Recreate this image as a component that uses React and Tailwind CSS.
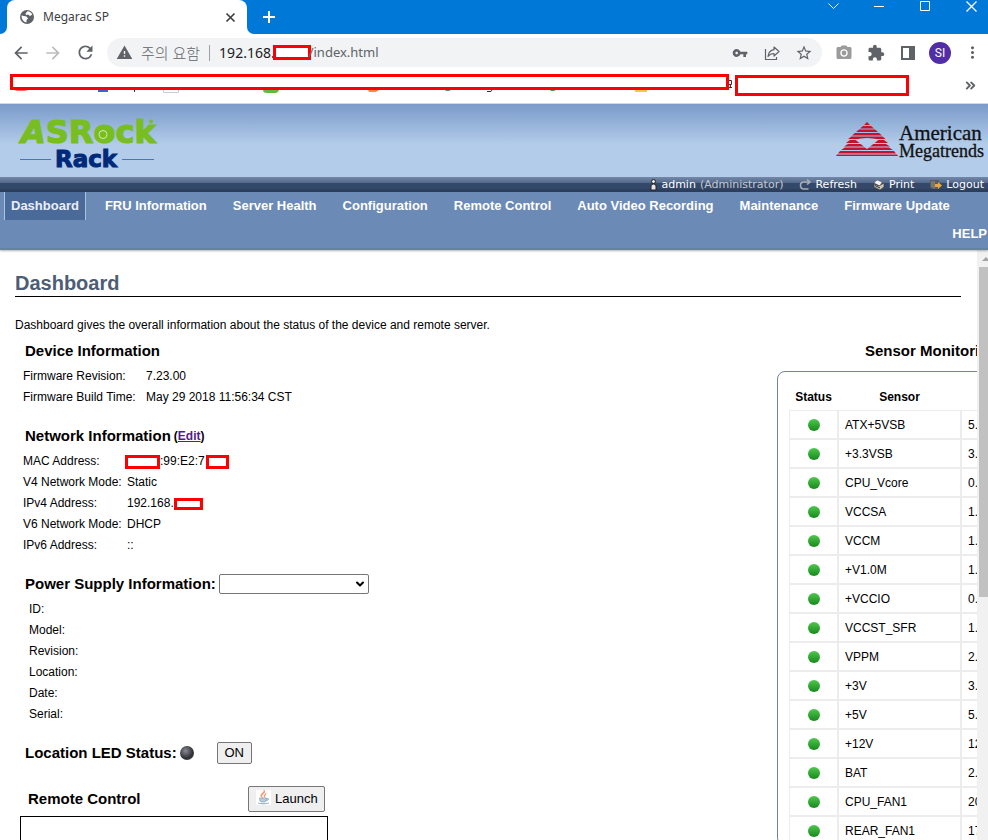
import React from "react";
import {
  MdArrowBack,
  MdArrowForward,
  MdRefresh,
  MdWarning,
  MdVpnKey,
  MdStarBorder,
  MdPhotoCamera,
  MdExtension,
  MdMoreVert,
} from "react-icons/md";
import { ChevronDown, ChevronsRight } from "lucide-react";

const NAV = [
  "Dashboard",
  "FRU Information",
  "Server Health",
  "Configuration",
  "Remote Control",
  "Auto Video Recording",
  "Maintenance",
  "Firmware Update",
];

const SENSORS = [
  ["ATX+5VSB", "5.1"],
  ["+3.3VSB", "3.4"],
  ["CPU_Vcore", "0.7"],
  ["VCCSA", "1.0"],
  ["VCCM", "1.2"],
  ["+V1.0M", "1.0"],
  ["+VCCIO", "0.9"],
  ["VCCST_SFR", "1.0"],
  ["VPPM", "2.5"],
  ["+3V", "3.3"],
  ["+5V", "5.0"],
  ["+12V", "12.1"],
  ["BAT", "2.9"],
  ["CPU_FAN1", "2000"],
  ["REAR_FAN1", "1700"],
];

const SUPPLY = ["ID:", "Model:", "Revision:", "Location:", "Date:", "Serial:"];

function TabStrip() {
  return (
    <div className="flex h-[34px] shrink-0 items-start bg-[#0078d7] pl-[7px]">
      <div className="relative flex h-full w-[240px] items-center rounded-t-lg bg-white pl-3 pr-[10px]">
        <svg className="absolute -left-[7px] bottom-0" width="7" height="7" viewBox="0 0 7 7">
          <path d="M7 0v7H0a7 7 0 0 0 7-7z" fill="#fff" />
        </svg>
        <svg className="absolute -right-[7px] bottom-0" width="7" height="7" viewBox="0 0 7 7">
          <path d="M0 0v7h7a7 7 0 0 1-7-7z" fill="#fff" />
        </svg>
        <svg width="16" height="16" viewBox="0 0 16 16">
          <circle cx="8" cy="8" r="7" fill="#5f6368" />
          <path d="M2.500 6.500l5 1 1.500 2-1.500 1.500v2.500Q2.500 12.500 2.500 6.500zM8.500 2.200q3.500.3 4.800 3.300l-2.300 1.500-2-1.500-2 .5-.5-1.500z" fill="#fff" />
        </svg>
        <span className="ml-2 flex-1 text-xs text-[#3c4043]">Megarac SP</span>
        <button aria-label="Close tab">
          <svg width="13" height="13" viewBox="0 0 13 13" fill="none" stroke="#3c4043" strokeWidth="1.700">
            <path d="M2.500 2.500l8 8M10.500 2.500l-8 8" />
          </svg>
        </button>
      </div>
      <button aria-label="New tab" className="ml-3 flex h-full items-center text-white">
        <svg width="19" height="19" viewBox="0 0 19 19" fill="none" stroke="currentColor" strokeWidth="2">
          <path d="M10 3v12M4 9h12" />
        </svg>
      </button>
      <div className="ml-auto flex text-white">
        <button aria-label="Search tabs" className="flex h-3 w-[46px] items-center justify-center">
          <svg width="11" height="7" viewBox="0 0 11 7" fill="none" stroke="currentColor">
            <path d="M.5.5l5 5 5-5" />
          </svg>
        </button>
        <button aria-label="Minimize" className="flex h-3 w-[46px] items-center justify-center">
          <svg width="10" height="1" viewBox="0 0 10 1">
            <path d="M0 0h10v1H0z" fill="currentColor" />
          </svg>
        </button>
        <button aria-label="Maximize" className="flex h-3 w-[46px] items-center justify-center">
          <svg width="10" height="10" viewBox="0 0 10 10" fill="none" stroke="currentColor">
            <path d="M.5.5h9v9h-9z" />
          </svg>
        </button>
        <button aria-label="Close" className="flex h-3 w-10 items-center justify-center pl-[6px]">
          <svg width="11" height="11" viewBox="0 0 11 11" fill="none" stroke="currentColor" strokeWidth="1.300">
            <path d="M.5.5l10 10M10.500.5l-10 10" />
          </svg>
        </button>
      </div>
    </div>
  );
}

function ToolButton({ label, children }) {
  return (
    <button aria-label={label} className="flex w-8 shrink-0 items-center justify-center">
      {children}
    </button>
  );
}

function Toolbar() {
  return (
    <div className="flex h-[37px] shrink-0 items-center bg-white pl-[5px] text-[#5f6368]">
      <ToolButton label="Back"><MdArrowBack size={20} /></ToolButton>
      <ToolButton label="Forward"><MdArrowForward size={20} className="text-[#babcbe]" /></ToolButton>
      <ToolButton label="Reload"><MdRefresh size={21} /></ToolButton>
      <div className="mx-[6px] flex h-[29px] min-w-0 flex-1 items-center rounded-full bg-[#f1f3f4] pl-[9px] pr-[2px]">
        <MdWarning size={17} className="shrink-0" />
        <span className="ml-2 whitespace-nowrap text-[15px] leading-5 font-light">주의 요함</span>
        <span className="mx-[9px] h-4 w-px bg-[#9aa0a6]" />
        <div className="flex flex-1 items-center text-sm">
          <span className="text-[#202124]">192.168.</span>
          <span className="-mx-[2px] h-[15px] w-[38px] border-3 border-[#ff0000] bg-white" />
          <span className="text-[13px]">/index.html</span>
        </div>
        <ToolButton label="Passwords"><MdVpnKey size={16} /></ToolButton>
        <ToolButton label="Share">
          <svg width="16" height="16" viewBox="0 0 16 16" fill="none" stroke="currentColor" strokeWidth="1.2">
            <path d="M1.500 4v10.500h11V12" />
            <path d="M10 2l5 4.500-5 4.500V8.500c-3 0-4.500 1-6 3 .4-3.500 2.500-6.300 6-6.800z" strokeLinejoin="round" />
          </svg>
        </ToolButton>
        <ToolButton label="Bookmark"><MdStarBorder size={18} /></ToolButton>
      </div>
      <ToolButton label="Capture"><MdPhotoCamera size={18} className="text-[#9b9b9b]" /></ToolButton>
      <ToolButton label="Extensions"><MdExtension size={18} /></ToolButton>
      <ToolButton label="Side panel">
        <svg width="14" height="14" viewBox="0 0 14 14">
          <path d="M0 0h14v14H0zM2 2v10h6V2z" fill="currentColor" fillRule="evenodd" />
        </svg>
      </ToolButton>
      <ToolButton label="Profile">
        <span className="flex size-[22px] items-center justify-center rounded-full bg-[#512da8] font-['Roboto',sans-serif] text-xs text-white">SI</span>
      </ToolButton>
      <ToolButton label="Menu"><MdMoreVert size={19} /></ToolButton>
    </div>
  );
}

function Bookmarks() {
  return (
    <div className="relative flex h-[33px] shrink-0 items-start border-b border-[#d5d8dc] bg-white pl-[10px] pt-[3px]">
      <div className="relative h-4 w-[719px] border-3 border-[#ff0000] bg-white" />
      <div className="ml-[6px] mt-px h-[21px] w-[174px] border-3 border-[#ff0000] bg-white" />
      <button aria-label="More bookmarks" className="ml-auto mr-[10px] mt-1">
        <ChevronsRight size={15} strokeWidth={3} className="text-[#5f6368]" />
      </button>
      <svg className="absolute left-0 top-[3px]" width="735" height="22" viewBox="0 0 735 22">
        <path d="M14 16h14l-3 1h-8z" fill="#ff6b6b" />
        <path d="M98 16h10v2H98z" fill="#3367d6" />
        <path d="M134 16h1v2h-1z" fill="#333" />
        <path d="M163.500 16v2.500h15V16" fill="none" stroke="#ccc" />
        <path d="M263 16h16q-1 3-4 3h-8q-4 0-4-3z" fill="#5dbb46" />
        <path d="M368 16h11l-3 2h-7z" fill="#ff8a3c" />
        <path d="M445 16h6l-2 1h-3zM550 16h6l-2 1h-3z" fill="#34a853" />
        <path d="M487 17.500h4l1-1.500" fill="none" stroke="#333" />
        <path d="M635 16h12v2h-12z" fill="#f7c948" />
        <path d="M729 6.500h2.500v4H729M730.500 10.500v3M729 13.500h3" fill="none" stroke="#333" />
      </svg>
    </div>
  );
}

function AsrockLogo() {
  return (
    <svg className="overflow-visible" width="140" height="56" viewBox="0 0 140 56" role="img" aria-label="ASRock Rack">
      <g fontFamily="DejaVu Sans" fontWeight="bold">
        <text x="1" y="30" fontSize="32" fill="#78be20" stroke="#78be20" strokeWidth="1.2">
          <tspan fontStyle="italic">A</tspan>SRock
        </text>
        <text x="35" y="54" fontSize="23" fill="#00297a" stroke="#00297a" strokeWidth="1">
          Rack
        </text>
      </g>
      <circle cx="83" cy="21.500" r="7" fill="#78be20" />
      <circle cx="83" cy="21.500" r="4" fill="none" stroke="#d5e6c0" strokeWidth="1" />
      <circle cx="131" cy="8.500" r="2" fill="#78be20" />
      <path d="M0 46.500h31M102 46.500h32" stroke="#4a76b4" />
    </svg>
  );
}

function MegatrendsLogo() {
  return (
    <svg className="overflow-visible" width="152" height="44" viewBox="0 0 152 44" role="img" aria-label="American Megatrends">
      <g fill="#c4122f">
        <path d="M31 0l3 3h-6zM27 4h8l3 2.500H24zM23 7.500h16l3 2.500H20zM19 11h24l3 2.500H16zM15.500 14.500h31l3 2.500H12z" />
        <path d="M14 18h8l3 3H10zM40 18h8l4 3H37z" />
        <path d="M12 22h14l3 2.500H8zM36 22h14l4 2.500H33z" />
        <path d="M9 25.500h44l4 2.500H5z" />
        <path d="M4 29h54l2 2.500H2zM1 32.500h60l1 1.500H0z" />
      </g>
      <path d="M19 17.500q12-3 24 0L31 27z" fill="#b2cce9" />
      <g fontFamily="Liberation Serif" fill="#111" stroke="#111" strokeWidth="0.3">
        <text x="63" y="18" fontSize="21">American</text>
        <text x="63" y="35" fontSize="18">Megatrends</text>
      </g>
    </svg>
  );
}

function UserBar() {
  return (
    <div className="flex h-[15px] shrink-0 items-center justify-end bg-[linear-gradient(#7488a8_0px,#52698c_6px,#34496a_6px,#34496a_12px,#2c3f5c_12px)] pr-1 font-['DejaVu_Sans',sans-serif] text-[11px] leading-[15px] text-white">
      <svg width="7" height="12" viewBox="0 0 7 12">
        <circle cx="3.500" cy="2.500" r="2" fill="#e6e6e6" stroke="#222" />
        <path d="M1 11V7q0-2 2.500-2T6 7v4z" fill="#e6e6e6" stroke="#222" />
      </svg>
      <span className="ml-1">admin</span>
      <span className="ml-1 text-[#c4c8ce]">(Administrator)</span>
      <a href="#refresh" className="ml-4 flex items-center gap-1">
        <svg width="12" height="12" viewBox="0 0 12 12" fill="none" stroke="#a8adb5" strokeWidth="1.600">
          <path d="M9.500 10H5Q1.500 10 1.500 6.500T5 3h5M8 .500L11 3 8 5.500" />
        </svg>
        Refresh
      </a>
      <a href="#print" className="ml-4 flex items-center gap-1">
        <svg width="12" height="12" viewBox="0 0 12 12">
          <path d="M1 4l3-3 5 2-2 4z" fill="#f4f4f4" stroke="#555" strokeWidth=".5" />
          <path d="M1 5l5 2 5-3v4l-4 3-6-3z" fill="#c9c4bb" stroke="#333" strokeWidth=".6" />
          <path d="M2 6.500l5 2.500" stroke="#333" />
        </svg>
        Print
      </a>
      <a href="#logout" className="ml-4 flex items-center gap-1">
        <svg width="12" height="12" viewBox="0 0 12 12">
          <path d="M0 1h9v9H2L0 8z" fill="#5c5c5c" />
          <path d="M1 2h4v8L1 8z" fill="#777" />
          <path d="M5 5h3V3l4 3.500L8 10V8H5z" fill="#e8a83c" />
        </svg>
        Logout
      </a>
    </div>
  );
}

function MainNav() {
  return (
    <nav className="relative z-10 shrink-0 border-b-2 border-[#66829f] bg-[#6b8ab5] text-[13px] leading-7 font-bold text-white shadow-[0_1px_2px_rgba(0,0,0,0.3)]">
      <ul className="flex gap-3 pl-1">
        {NAV.map((item, i) => (
          <li key={item} className="whitespace-nowrap">
            <a
              href="#"
              className={
                i === 0
                  ? "block border-x border-[#a9c4e6] bg-[#4a6b9a] px-[6px] text-[#e9eefc]"
                  : "block border-x border-transparent px-[6px]"
              }
            >
              {item}
            </a>
          </li>
        ))}
      </ul>
      <div className="flex justify-end pr-px">
        <a href="#help">HELP</a>
      </div>
    </nav>
  );
}

function Heading({ children }) {
  return <h2 className="flex h-[30px] items-center gap-[3px] pl-[10px] text-[15px] font-bold">{children}</h2>;
}

function LeftColumn() {
  return (
    <div className="min-w-0 flex-1">
      <Heading>Device Information</Heading>
      <dl className="grid grid-cols-[123px_1fr] pl-2 leading-[21px]">
        <dt>Firmware Revision:</dt>
        <dd>7.23.00</dd>
        <dt>Firmware Build Time:</dt>
        <dd>May 29 2018 11:56:34 CST</dd>
      </dl>

      <div className="mt-[13px]">
        <Heading>
          Network Information
          <span className="text-xs">
            (<a href="#edit" className="text-[#551a8b] underline">Edit</a>)
          </span>
        </Heading>
      </div>
      <dl className="grid grid-cols-[104px_1fr] pl-2 leading-[21px]">
        <dt>MAC Address:</dt>
        <dd className="-ml-[2px] flex items-center">
          <span className="h-[14px] w-[35px] border-3 border-[#ff0000]" />
          :99:E2:7
          <span className="ml-px h-[14px] w-[23px] border-3 border-[#ff0000]" />
        </dd>
        <dt>V4 Network Mode:</dt>
        <dd>Static</dd>
        <dt>IPv4 Address:</dt>
        <dd className="flex items-center">
          192.168.
          <span className="h-3 w-[29px] border-3 border-[#ff0000]" />
        </dd>
        <dt>V6 Network Mode:</dt>
        <dd>DHCP</dd>
        <dt>IPv6 Address:</dt>
        <dd>::</dd>
      </dl>

      <div className="mt-[13px]">
        <Heading>
          <label htmlFor="psu">Power Supply Information:</label>
          <span className="relative flex">
            <select id="psu" className="h-5 w-[150px] appearance-none rounded-xs border border-[#767676] bg-white" />
            <ChevronDown size={12} strokeWidth={4} className="pointer-events-none absolute right-[3px] top-1" />
          </span>
        </Heading>
      </div>
      <ul className="pl-[14px] leading-[21px]">
        {SUPPLY.map((s) => (
          <li key={s}>{s}</li>
        ))}
      </ul>

      <div className="mt-[13px]">
        <Heading>
          Location LED Status:
          <span className="size-[14px] rounded-full bg-[radial-gradient(circle_at_40%_35%,#8a8a94,#2e2e36_60%,#55555c)]" />
          <button className="ml-5 h-[22px] w-[35px] rounded-xs border border-[#767676] bg-[#efefef] text-[13px] font-normal">
            ON
          </button>
        </Heading>
      </div>

      <div className="mt-4 flex h-[30px] w-[310px] items-center justify-between pl-[13px]">
        <h2 className="text-[15px] font-bold">Remote Control</h2>
        <button className="flex h-[26px] w-[77px] items-center rounded-xs border border-[#767676] bg-[#efefef] pl-[7px] text-[13px]">
          <svg className="mb-1" width="15" height="15" viewBox="0 0 15 15">
            <path d="M0 0h15v15H0z" fill="#fff" />
            <path d="M8 0q2 2-1 4t0 4Q3 6 6 3.500T8 0zM10.500 3Q7 5 8.500 7.500" fill="#f2936b" stroke="#f2936b" strokeWidth=".7" />
            <path d="M3.500 8h7q0 4-2 4h-3q-2 0-2-4zM10.500 8.500q3-.5 1.500 1.500l-2 1M2 13q5 2 11 0" fill="#b9cbdc" stroke="#8fa9c0" strokeWidth=".8" />
          </svg>
          <span className="ml-1">Launch</span>
        </button>
      </div>
      <div className="ml-[5px] mt-[2px] h-[200px] w-[308px] border border-black" />
    </div>
  );
}

function SensorPanel() {
  return (
    <div className="w-[200px] shrink-0 overflow-hidden whitespace-nowrap">
      <h2 className="pl-[88px] text-[15px] leading-[30px] font-bold">Sensor Monitoring</h2>
      <div className="mt-[5px] w-[430px] rounded-lg border border-[#7583a0] pl-[11px] pt-3">
        <table className="w-[400px] table-fixed border-separate border-spacing-0 text-left">
          <colgroup>
            <col className="w-[49px]" />
            <col className="w-[123px]" />
            <col />
          </colgroup>
          <thead>
            <tr className="h-[26px] text-center">
              <th scope="col">Status</th>
              <th scope="col">Sensor</th>
              <th scope="col">Reading</th>
            </tr>
          </thead>
          <tbody>
            {SENSORS.map(([name, value]) => (
              <tr key={name} className="h-[29px]">
                <td className="border border-[#ececec]">
                  <span className="mx-auto block size-3 rounded-full bg-linear-to-b from-[#4cc84c] to-[#168a1c]" />
                </td>
                <td className="border border-[#ececec] pl-[6px]">{name}</td>
                <td className="border border-[#ececec] pl-[6px]">{value}</td>
              </tr>
            ))}
          </tbody>
        </table>
      </div>
    </div>
  );
}

export default function App() {
  return (
    <div className="flex h-screen flex-col overflow-hidden bg-white font-['Noto_Sans','Noto_Sans_CJK_KR',sans-serif]">
      <TabStrip />
      <Toolbar />
      <Bookmarks />
      <div className="flex min-h-0 flex-1 flex-col font-['Liberation_Sans',Arial,sans-serif] text-xs text-black">
        <header className="flex h-[73px] shrink-0 items-start justify-between bg-linear-to-b from-[#7a9ac9] to-[#b2cce9] to-55% pl-5 pt-[9px]">
          <AsrockLogo />
          <div className="pt-[9px]">
            <MegatrendsLogo />
          </div>
        </header>
        <UserBar />
        <MainNav />
        <div className="flex min-h-0 flex-1">
          <main className="min-w-0 flex-1 overflow-hidden pl-[15px]">
            <h1 className="mr-4 border-b border-black pt-5 text-xl leading-[26px] font-bold text-[#4d5d75]">
              Dashboard
            </h1>
            <p className="mt-[18px] leading-[21px]">
              Dashboard gives the overall information about the status of the device and remote server.
            </p>
            <div className="flex">
              <LeftColumn />
              <SensorPanel />
            </div>
          </main>
          <div className="flex w-[11px] shrink-0 flex-col items-end overflow-hidden bg-[#f1f1f1]">
            <svg className="shrink-0" width="9" height="17" viewBox="0 0 9 17">
              <path d="M3 11l4-4 4 4z" fill="#a3a3a3" />
            </svg>
            <div className="h-[330px] w-[9px] shrink-0 bg-[#c1c1c1]" />
          </div>
        </div>
      </div>
    </div>
  );
}
